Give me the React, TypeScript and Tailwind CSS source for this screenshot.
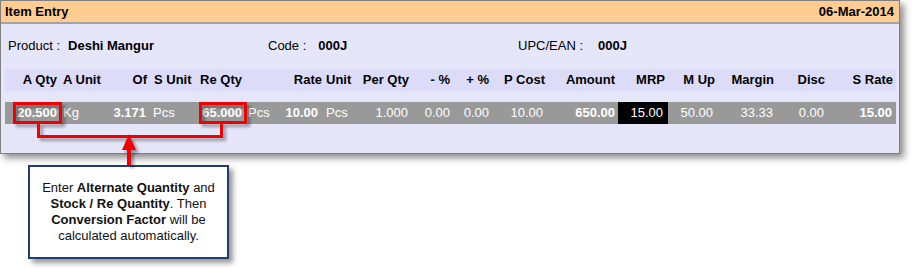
import React from 'react';

type Cell = { w: string; text: string; align: 'l' | 'r'; pad?: string; bold?: boolean; dark?: boolean };

const headerCells: Cell[] = [
  { w: 'w-[52px]', text: 'A Qty', align: 'r' },
  { w: 'w-[63px]', text: 'A Unit', align: 'l', pad: 'pl-[6px]' },
  { w: 'w-[27px]', text: 'Of', align: 'r' },
  { w: 'w-[48px]', text: 'S Unit', align: 'l', pad: 'pl-[7px]' },
  { w: 'w-[47px]', text: 'Re Qty', align: 'r' },
  { w: 'w-[80px]', text: 'Rate', align: 'r' },
  { w: 'w-[33px]', text: 'Unit', align: 'l', pad: 'pl-[4px]' },
  { w: 'w-[54px]', text: 'Per Qty', align: 'r' },
  { w: 'w-[41px]', text: '- %', align: 'r' },
  { w: 'w-[39px]', text: '+ %', align: 'r' },
  { w: 'w-[56px]', text: 'P Cost', align: 'r' },
  { w: 'w-[70px]', text: 'Amount', align: 'r' },
  { w: 'w-[50px]', text: 'MRP', align: 'r' },
  { w: 'w-[50px]', text: 'M Up', align: 'r' },
  { w: 'w-[59px]', text: 'Margin', align: 'r' },
  { w: 'w-[51px]', text: 'Disc', align: 'r' },
  { w: 'w-[68px]', text: 'S Rate', align: 'r' },
];

const dataCells: Cell[] = [
  { w: 'w-[52px]', text: '20.500', align: 'r', bold: true },
  { w: 'w-[53px]', text: 'Kg', align: 'l', pad: 'pl-[6px]' },
  { w: 'w-[36px]', text: '3.171', align: 'r', bold: true },
  { w: 'w-[49px]', text: 'Pcs', align: 'l', pad: 'pl-[7px]' },
  { w: 'w-[47px]', text: '65.000', align: 'r', bold: true },
  { w: 'w-[38px]', text: 'Pcs', align: 'l', pad: 'pl-[6px]' },
  { w: 'w-[38px]', text: '10.00', align: 'r', bold: true },
  { w: 'w-[42px]', text: 'Pcs', align: 'l', pad: 'pl-[8px]' },
  { w: 'w-[48px]', text: '1.000', align: 'r' },
  { w: 'w-[42px]', text: '0.00', align: 'r' },
  { w: 'w-[39px]', text: '0.00', align: 'r' },
  { w: 'w-[54px]', text: '10.00', align: 'r' },
  { w: 'w-[72px]', text: '650.00', align: 'r', bold: true },
  { w: 'w-[3px]', text: '', align: 'r' },
  { w: 'w-[50px]', text: '15.00', align: 'r', pad: 'pr-[5px]', dark: true },
  { w: 'w-[45px]', text: '50.00', align: 'r' },
  { w: 'w-[60px]', text: '33.33', align: 'r' },
  { w: 'w-[51px]', text: '0.00', align: 'r' },
  { w: 'w-[68px]', text: '15.00', align: 'r', bold: true },
];

function Row({ cells, className }: { cells: Cell[]; className: string }) {
  return (
    <div className={`ml-[4px] w-[891px] h-[22px] flex leading-[22px] ${className}`}>
      {cells.map((c, i) => (
        <div
          key={i}
          className={`${c.w} shrink-0 whitespace-nowrap ${c.align === 'r' ? 'text-right' : 'text-left'} ${c.pad ?? ''} ${
            c.bold ? 'font-bold' : ''
          } ${c.dark ? 'bg-black' : ''}`}
        >
          {c.text}
        </div>
      ))}
    </div>
  );
}

export default function App() {
  return (
    <div
      className="relative w-[916px] h-[268px] bg-white text-[13px] text-black overflow-hidden"
      style={{ fontFamily: '"Liberation Sans", Arial, sans-serif' }}
    >
      {/* item entry panel */}
      <div className="w-[900px] h-[154px] border border-[#808080] bg-[#E6E6FA] shadow-[4px_4px_7px_rgba(0,0,0,0.45)]">
        <div className="h-[23px] bg-[#FFCC91] border-b-2 border-[#A3A3A3] flex items-center justify-between px-[4px] font-bold leading-none">
          <span>Item Entry</span>
          <span className="pr-[1px]">06-Mar-2014</span>
        </div>

        <div className="mt-[14px] h-[16px] leading-[16px] flex pl-[7px]">
          <div className="w-[260px] flex">
            <span>Product :</span>
            <span className="ml-[8px] font-bold">Deshi Mangur</span>
          </div>
          <div className="w-[250px] flex">
            <span>Code :</span>
            <span className="ml-[12px] font-bold">000J</span>
          </div>
          <div className="flex">
            <span>UPC/EAN :</span>
            <span className="ml-[15px] font-bold">000J</span>
          </div>
        </div>

        <Row cells={headerCells} className="mt-[15px] bg-[#DCDCF8] font-bold" />
        <Row cells={dataCells} className="mt-[11px] bg-[#999999] text-white" />
      </div>

      {/* callout */}
      <div className="ml-[28px] mt-[11px] w-[201px] h-[94px] border-2 border-[#223D6A] bg-white shadow-[4px_4px_5px_rgba(0,0,0,0.4)] flex items-center justify-center text-center leading-[16px] text-[#111]">
        <p>
          Enter <b>Alternate Quantity</b> and
          <br />
          <b>Stock / Re Quantity</b>. Then
          <br />
          <b>Conversion Factor</b> will be
          <br />
          calculated automatically.
        </p>
      </div>

      {/* red annotation overlay */}
      <svg className="absolute inset-0 pointer-events-none" width="916" height="268" viewBox="0 0 916 268">
        <defs>
          <filter id="sh" x="-10%" y="-10%" width="130%" height="150%">
            <feDropShadow dx="3" dy="3" stdDeviation="1.6" floodColor="#000" floodOpacity="0.35" />
          </filter>
        </defs>
        <g filter="url(#sh)" fill="none" stroke="#F00000" strokeWidth="3">
          <rect x="14.5" y="103.5" width="46" height="19" />
          <rect x="200.5" y="103.5" width="45" height="19" />
          <path d="M38.5 124 V136.5 H221.5 V124" />
          <path d="M129 149 V165" strokeWidth="4" />
          <polygon points="129,134 122,150 136,150" fill="#F00000" stroke="none" />
        </g>
      </svg>
    </div>
  );
}
